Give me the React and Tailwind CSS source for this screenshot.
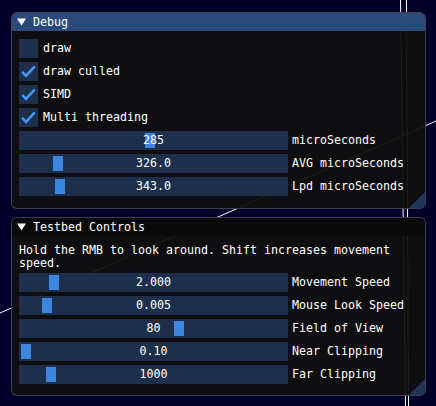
import React from "react";

const FONT = "font-['DejaVu_Sans_Mono','Liberation_Mono',monospace]";

function Check({ checked, label }) {
  return (
    <div className="flex items-center h-[19px]">
      <div className="w-[19px] h-[19px] bg-[#1d2f4a] shrink-0">
        {checked && (
          <svg width="19" height="19" viewBox="0 0 19 19">
            <polyline
              points="3.2,9.8 7,13.8 15.8,4.4"
              fill="none"
              stroke="#4296fa"
              strokeWidth="2.6"
              strokeLinejoin="miter"
              strokeLinecap="butt"
            />
          </svg>
        )}
      </div>
      <span className="ml-[5px] leading-[13px] whitespace-pre">{label}</span>
    </div>
  );
}

function Slider({ value, grab, label }) {
  return (
    <div className="flex items-center h-[19px]">
      <div className="relative w-[269px] h-[19px] bg-[#1d2f4a] shrink-0 flex items-center justify-center">
        <div
          className="absolute top-[2px] w-[10px] h-[15px] bg-[#3d85e0]"
          style={{ left: grab - 19 }}
        />
        <span className="relative leading-[13px] whitespace-pre">{value}</span>
      </div>
      <span className="ml-[4px] leading-[13px] whitespace-pre">{label}</span>
    </div>
  );
}

function Triangle() {
  return (
    <svg width="9" height="8" viewBox="0 0 9 8" className="shrink-0">
      <polygon points="0,0.5 9,0.5 4.5,7.5" fill="#ffffff" />
    </svg>
  );
}

function Grip() {
  return (
    <svg
      width="16"
      height="16"
      viewBox="0 0 16 16"
      className="absolute right-0 bottom-0"
    >
      <polygon points="16,0 16,16 0,16" fill="#1e3557" />
    </svg>
  );
}

function Window({ title, active, height, children }) {
  return (
    <div
      className={`relative w-[415px] rounded-[6px] border border-[rgba(110,110,128,0.5)] bg-[rgba(15,15,15,0.94)] overflow-hidden flex flex-col`}
      style={{ height }}
    >
      <div
        className={`h-[18px] shrink-0 flex items-center pl-[5px] ${
          active ? "bg-[#294a7a]" : "bg-[#0a0a0a]"
        }`}
      >
        <Triangle />
        <span className="ml-[7px] leading-[13px]">{title}</span>
      </div>
      {children}
      <Grip />
    </div>
  );
}

export default function App() {
  return (
    <div
      className={`relative w-[436px] h-[406px] bg-[#00002a] overflow-hidden text-white text-[11.63px] ${FONT}`}
    >
      <svg
        className="absolute inset-0"
        width="436"
        height="406"
        viewBox="0 0 436 406"
      >
        <line x1="0" y1="313" x2="436" y2="121" stroke="#ffffff" strokeWidth="1" />
        <line x1="400.5" y1="0" x2="405.5" y2="406" stroke="#ffffff" strokeWidth="1" />
        <line x1="406.5" y1="0" x2="408.5" y2="406" stroke="#ffffff" strokeWidth="1" />
      </svg>
      <div className="relative flex flex-col pl-[11px] pt-[12px] gap-[8px]">
        <Window title="Debug" active height={197}>
          <div className="flex flex-col gap-[4px] pl-[7px] pt-[8px]">
            <Check checked={false} label="draw" />
            <Check checked label="draw culled" />
            <Check checked label="SIMD" />
            <Check checked label="Multi threading" />
            <Slider value="285" grab={145} label="microSeconds" />
            <Slider value="326.0" grab={53} label="AVG microSeconds" />
            <Slider value="343.0" grab={55} label="Lpd microSeconds" />
          </div>
        </Window>
        <Window title="Testbed Controls" active={false} height={179}>
          <div className="flex flex-col pl-[7px] pt-[8px]">
            <div className="leading-[13px] whitespace-pre">
              {"Hold the RMB to look around. Shift increases movement"}
              <br />
              {"speed."}
            </div>
            <div className="flex flex-col gap-[4px] mt-[3px]">
              <Slider value="2.000" grab={49} label="Movement Speed" />
              <Slider value="0.005" grab={42} label="Mouse Look Speed" />
              <Slider value="80" grab={174} label="Field of View" />
              <Slider value="0.10" grab={21} label="Near Clipping" />
              <Slider value="1000" grab={46} label="Far Clipping" />
            </div>
          </div>
        </Window>
      </div>
    </div>
  );
}
